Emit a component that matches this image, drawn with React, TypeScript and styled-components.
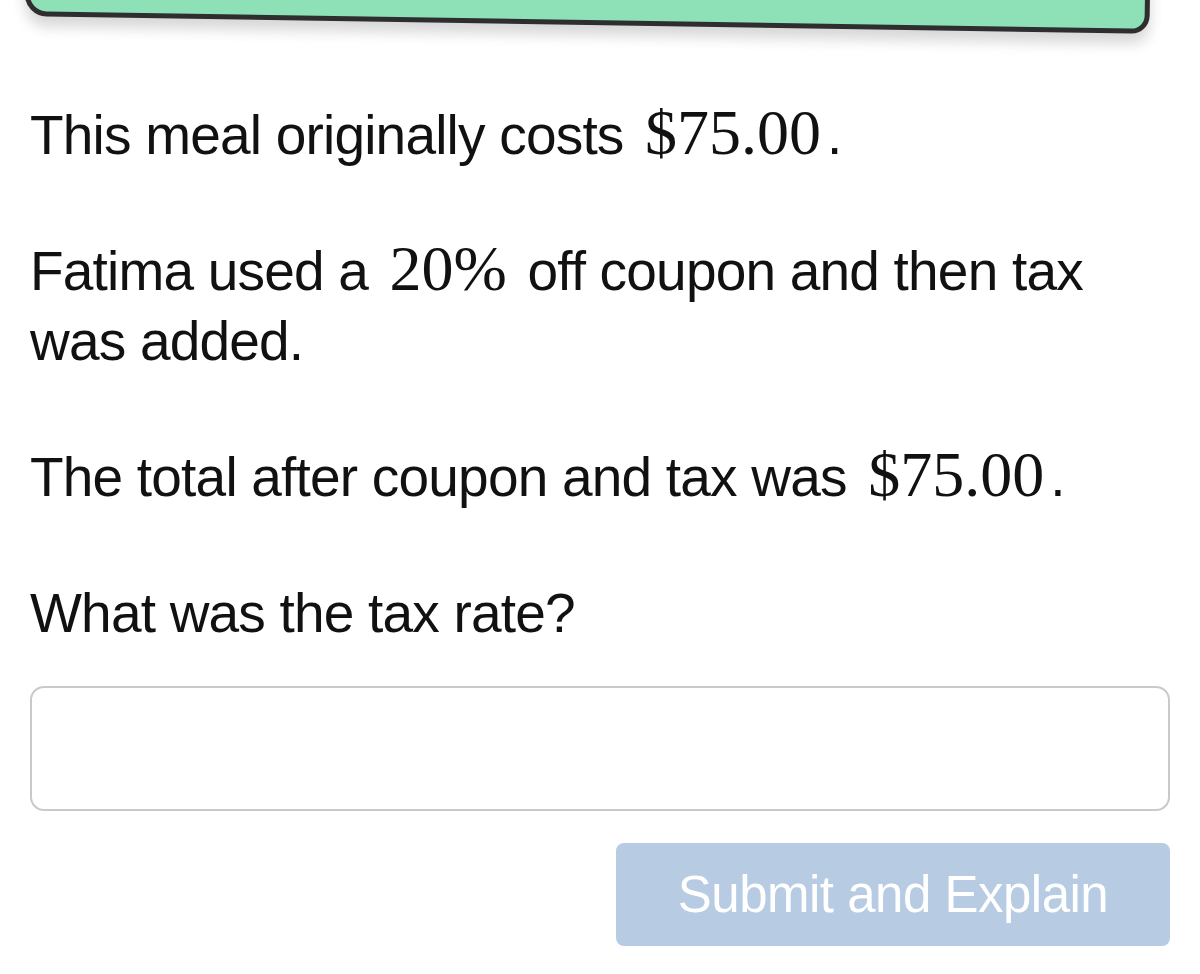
import styled, { createGlobalStyle } from 'styled-components';

const GlobalStyle = createGlobalStyle`
	html,
	body {
		margin: 0;
		padding: 0;
		background: #ffffff;
		overflow: hidden;
	}
`;

const Page = styled.div`
	display: flex;
	flex-direction: column;
	padding: 0 30px;
	font-family: 'Liberation Sans', Arial, sans-serif;
	color: #111111;
`;

const Banner = styled.div`
	height: 60px;
	margin: -45px 20px 0 -5px;
	background: #8ee0b7;
	border: 5px solid #2e2e31;
	border-radius: 0 0 18px 22px;
	box-shadow: 0 10px 14px rgba(0, 0, 0, 0.16);
	transform: rotate(0.9deg);
`;

const Prompt = styled.div`
	margin-top: 75px;
	padding-right: 20px;
	display: flex;
	flex-direction: column;
	gap: 66px;
`;

const Paragraph = styled.p`
	margin: 0;
	font-size: 55px;
	line-height: 70px;
	letter-spacing: -0.8px;
`;

const Math = styled.span`
	display: inline-block;
	margin: 0 6px 0 7px;
	font-family: 'Liberation Serif', 'Times New Roman', serif;
	font-size: 64px;
	line-height: 64px;
	letter-spacing: 0;
`;

const AnswerInput = styled.input`
	box-sizing: border-box;
	margin-top: 38px;
	width: 100%;
	height: 125px;
	border: 2px solid #c9c9c9;
	border-radius: 14px;
	background: #ffffff;
	outline: none;
	padding: 0 24px;
	font-family: inherit;
	font-size: 50px;
`;

const Actions = styled.div`
	display: flex;
	justify-content: flex-end;
	margin-top: 32px;
`;

const SubmitButton = styled.button`
	width: 554px;
	height: 103px;
	border: none;
	border-radius: 8px;
	background: #b7cbe3;
	color: #ffffff;
	font-family: 'Liberation Sans', Arial, sans-serif;
	font-size: 51px;
	letter-spacing: -0.5px;
	cursor: default;
`;

export default function App() {
	return (
		<>
			<GlobalStyle />
			<Page>
				<Banner />
				<Prompt>
					<Paragraph>
						This meal originally costs <Math>$75.00</Math>.
					</Paragraph>
					<Paragraph>
						Fatima used a <Math>20%</Math> off coupon and then tax
						<br />
						was added.
					</Paragraph>
					<Paragraph>
						The total after coupon and tax was <Math>$75.00</Math>.
					</Paragraph>
					<Paragraph>What was the tax rate?</Paragraph>
				</Prompt>
				<AnswerInput type='text' aria-label='tax rate' />
				<Actions>
					<SubmitButton disabled>Submit and Explain</SubmitButton>
				</Actions>
			</Page>
		</>
	);
}
